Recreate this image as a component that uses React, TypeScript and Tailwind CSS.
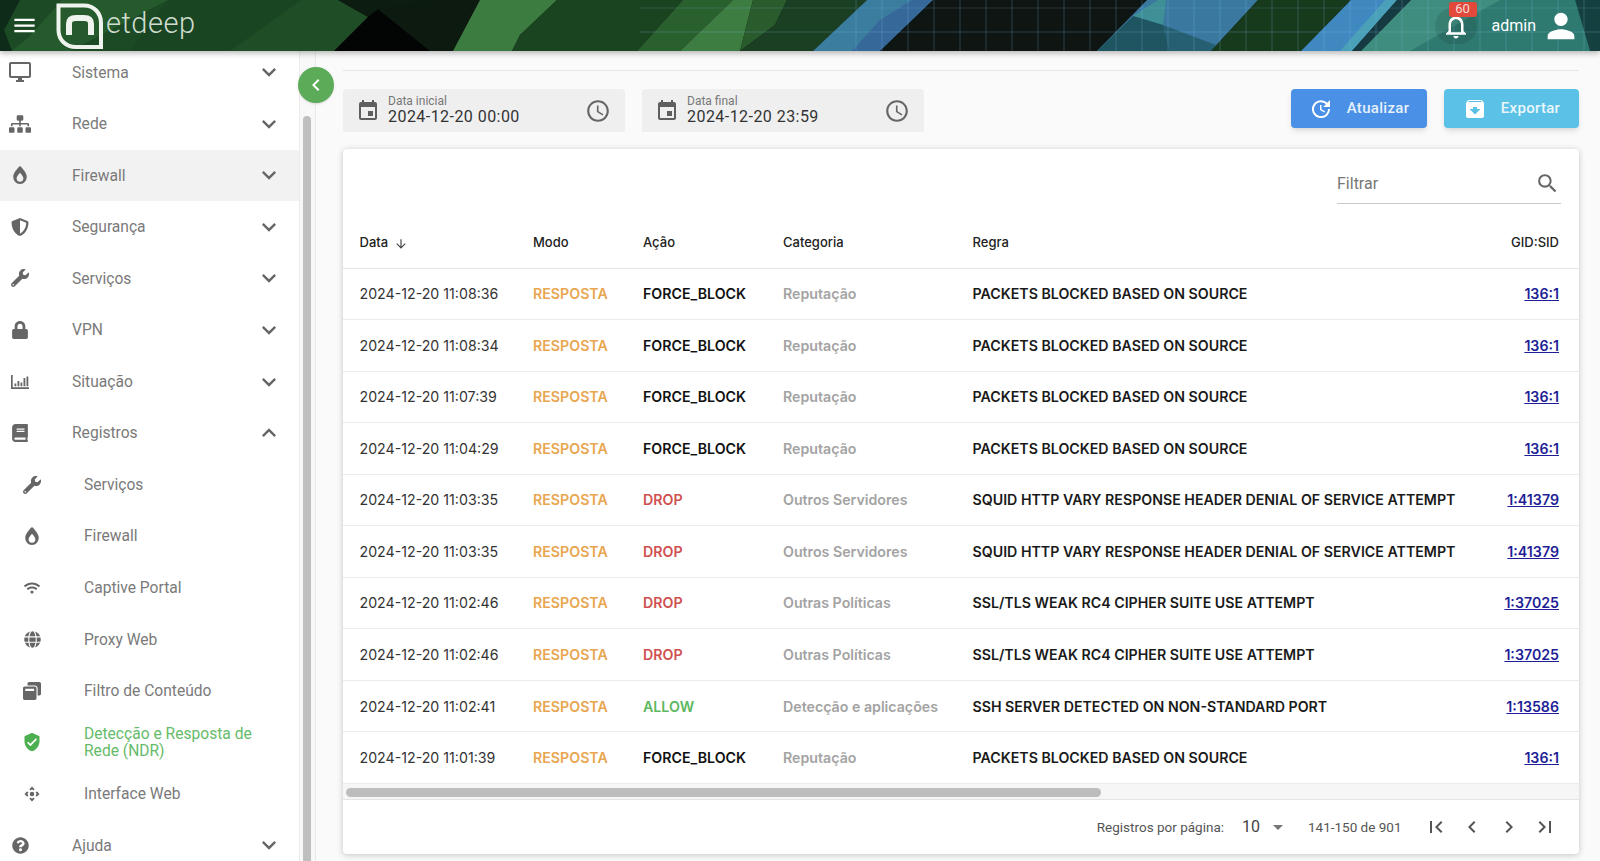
import React from "react";
import {
  MdMenu, MdExpandMore, MdExpandLess, MdOutlineDesktopWindows, MdVerifiedUser, MdControlCamera, MdChevronLeft, MdChevronRight,
  MdEvent, MdAccessTime, MdUpdate, MdArchive, MdSearch, MdOutlineNotifications, MdPerson, MdFirstPage, MdLastPage, MdArrowDownward, MdArrowDropDown,
} from "react-icons/md";
import { FaSitemap, FaBurn, FaShieldAlt, FaWrench, FaLock, FaBook, FaQuestionCircle, FaWifi, FaGlobe, FaWindowRestore } from "react-icons/fa";

function ChartIcon() {
  return (
    <svg width="18" height="14" viewBox="0 0 18 14" fill="#666">
      <path d="M0 0h1.700v12.300H18V14H0z" />
      <path d="M3.500 8.500h1.800v2.700H3.500zM6.500 6H8.300v5.200H6.500zM9.500 7.500h1.800v3.700H9.500zM12.500 3h1.800v8.200h-1.800zM15.500 1.500h1.800v9.700h-1.800z" />
    </svg>
  );
}

function HeaderArt() {
  const vs: number[] = [];
  for (let x = 856; x < 1600; x += 26) vs.push(x);
  return (
    <svg className="absolute inset-0 h-full w-full" viewBox="0 0 1600 51" preserveAspectRatio="none">
      <rect width="1600" height="51" fill="#0f1513" />
      <polygon points="0,0 338,0 368,17 334,51 0,51" fill="#1c4a24" />
      <polygon points="0,0 20,0 4,30 12,51 0,51" fill="#0e2a18" />
      <polygon points="12,51 30,36 62,0 168,0 70,51" fill="#255a2c" />
      <polygon points="130,51 168,0 300,0 230,51" fill="#1a4522" />
      <polygon points="302,0 338,0 368,17 334,51 230,51" fill="#1e4d26" />
      <polygon points="338,0 450,0 372,14 368,17" fill="#0c1c10" />
      <polygon points="368,17 378,9 430,51 334,51" fill="#030504" />
      <polygon points="378,9 440,0 480,0 453,51 430,51" fill="#0d1a10" />
      <polygon points="480,0 557,0 520,35 512,51 453,51" fill="#3d7c41" />
      <polygon points="557,0 683,0 637,51 512,51 520,35" fill="#1a4420" />
      <polygon points="683,0 733,0 680,51 637,51" fill="#2a5f2e" />
      <polygon points="733,0 753,0 740,51 680,51" fill="#3e7d42" />
      <polygon points="753,0 787,0 775,25 740,51" fill="#2a5b2d" />
      <polygon points="787,0 867,0 813,51 740,51 775,25" fill="#1a3f22" />
      <polygon points="867,0 933,0 880,51 813,51" fill="#3a7d9e" />
      <polygon points="880,20 912,0 933,0 880,51 852,51" fill="#36699a" />
      <polygon points="933,0 1147,0 1097,51 880,51" fill="#0f1513" />
      <polygon points="1147,0 1258,0 1211,51 1097,51" fill="#3a78a0" />
      <polygon points="1133,16 1158,0 1166,0 1163,25" fill="#3f8f96" />
      <polygon points="1133,16 1163,25 1170,51 1097,51" fill="#1e5560" />
      <polygon points="1163,25 1216,45 1211,51 1170,51" fill="#265f72" />
      <polygon points="1258,0 1351,0 1301,51 1211,51" fill="#17391c" />
      <polygon points="1351,0 1397,0 1352,51 1301,51" fill="#4088c0" />
      <polygon points="1385,0 1397,0 1352,51 1340,51" fill="#4aa0b8" />
      <polygon points="1397,0 1411,0 1361,51 1352,51" fill="#163a42" />
      <polygon points="1411,0 1600,0 1600,51 1361,51" fill="#3f8d7e" />
      <polygon points="1500,0 1575,0 1590,51 1410,51" fill="#2f7a70" />
      <polygon points="1575,0 1600,0 1600,51 1590,51" fill="#154040" />
      {vs.map((x) => (
        <line key={x} x1={x} y1="0" x2={x} y2="51" stroke="#7fc4e8" strokeOpacity="0.25" strokeWidth="1" />
      ))}
      <line x1="640" y1="8" x2="1600" y2="8" stroke="#7fc4e8" strokeOpacity="0.18" />
      <line x1="640" y1="32" x2="1600" y2="32" stroke="#7fc4e8" strokeOpacity="0.25" />
    </svg>
  );
}

function Logo() {
  return (
    <svg width="48" height="46" viewBox="0 0 48 46" fill="none" stroke="#eef3ee">
      <path d="M2.500 2.500H28C38 2.500 45 10 45 20V44H20C10 44 2.500 37 2.500 27Z" strokeWidth="4" />
      <path d="M13 32V21C13 17 15 15 20 15H28C33 15 35 17 35 21V32" strokeWidth="6" />
    </svg>
  );
}

type Item = { label: React.ReactNode; icon: React.ReactNode; sub?: boolean; open?: boolean; chev?: boolean; active?: boolean; hover?: boolean };

const items: Item[] = [
  { label: "Sistema", icon: <MdOutlineDesktopWindows size={24} />, chev: true },
  { label: "Rede", icon: <FaSitemap size={22} />, chev: true },
  { label: "Firewall", icon: <FaBurn size={18} />, chev: true, hover: true },
  { label: "Segurança", icon: <FaShieldAlt size={18} />, chev: true },
  { label: "Serviços", icon: <FaWrench size={18} />, chev: true },
  { label: "VPN", icon: <FaLock size={18} />, chev: true },
  { label: "Situação", icon: <ChartIcon />, chev: true },
  { label: "Registros", icon: <FaBook size={18} />, chev: true, open: true },
  { label: "Serviços", icon: <FaWrench size={18} />, sub: true },
  { label: "Firewall", icon: <FaBurn size={18} />, sub: true },
  { label: "Captive Portal", icon: <FaWifi size={16} />, sub: true },
  { label: "Proxy Web", icon: <FaGlobe size={17} />, sub: true },
  { label: "Filtro de Conteúdo", icon: <FaWindowRestore size={18} />, sub: true },
  { label: "Detecção e Resposta de Rede (NDR)", icon: <MdVerifiedUser size={20} />, sub: true, active: true },
  { label: "Interface Web", icon: <MdControlCamera size={18} />, sub: true },
  { label: "Ajuda", icon: <FaQuestionCircle size={17} />, chev: true },
];

function Row({ it }: { it: Item }) {
  return (
    <div className={`flex h-[51.55px] shrink-0 items-center ${it.hover ? "bg-[#f2f2f2]" : ""} ${it.sub ? "pl-3" : ""}`}>
      <span className={`flex w-10 shrink-0 items-center justify-center ${it.active ? "text-[#4caf50]" : "text-[#666666]"}`}>{it.icon}</span>
      <span className={`ml-8 pt-[2px] text-[15.6px] leading-[17.5px] ${it.sub ? "w-[190px]" : ""} ${it.active ? "text-[#66bb6a]" : "text-[#7a7a7a]"}`}>{it.label}</span>
      {it.chev && (
        <span className="ml-auto mr-[16px] text-[#666666]">
          {it.open ? <MdExpandLess size={28} /> : <MdExpandMore size={28} />}
        </span>
      )}
    </div>
  );
}

type Rec = [string, string, string, string, string];
const FB = "PACKETS BLOCKED BASED ON SOURCE";
const SQ = "SQUID HTTP VARY RESPONSE HEADER DENIAL OF SERVICE ATTEMPT";
const SS = "SSL/TLS WEAK RC4 CIPHER SUITE USE ATTEMPT";
const rows: Rec[] = [
  ["11:08:36", "FORCE_BLOCK", "Reputação", FB, "136:1"],
  ["11:08:34", "FORCE_BLOCK", "Reputação", FB, "136:1"],
  ["11:07:39", "FORCE_BLOCK", "Reputação", FB, "136:1"],
  ["11:04:29", "FORCE_BLOCK", "Reputação", FB, "136:1"],
  ["11:03:35", "DROP", "Outros Servidores", SQ, "1:41379"],
  ["11:03:35", "DROP", "Outros Servidores", SQ, "1:41379"],
  ["11:02:46", "DROP", "Outras Políticas", SS, "1:37025"],
  ["11:02:46", "DROP", "Outras Políticas", SS, "1:37025"],
  ["11:02:41", "ALLOW", "Detecção e aplicações", "SSH SERVER DETECTED ON NON-STANDARD PORT", "1:13586"],
  ["11:01:39", "FORCE_BLOCK", "Reputação", FB, "136:1"],
];

function actionColor(a: string) {
  if (a === "DROP") return "text-[#cf5050]";
  if (a === "ALLOW") return "text-[#5cb860]";
  return "text-[#111111]";
}

function DateField({ label, value }: { label: string; value: string }) {
  return (
    <div className="flex h-[43px] w-[282px] items-center rounded-t bg-[#efefef] pl-[13px] pr-[14px]">
      <MdEvent size={24} className="text-[#5f5f5f]" />
      <div className="ml-[8px] flex flex-col">
        <span className="text-[12px] leading-[13px] text-[#777777]">{label}</span>
        <span className="text-[16px] leading-[18px] tracking-[0.45px] text-[#333333]">{value}</span>
      </div>
      <MdAccessTime size={26} className="ml-auto text-[#666666]" />
    </div>
  );
}

export default function App() {
  return (
    <div className="flex h-screen w-full flex-col overflow-hidden bg-[#fafafa] font-['Roboto',sans-serif]">
      <header className="relative z-10 flex h-[51px] shrink-0 items-center shadow-[0_2px_6px_rgba(0,0,0,0.3)]">
        <HeaderArt />
        <div className="relative flex w-full items-center">
          <MdMenu size={27} className="ml-[11px] text-white" />
          <div className="ml-[18px]"><Logo /></div>
          <span className="ml-[2px] mt-[-5px] text-[29px] font-light leading-none tracking-[0.5px] text-[#cfdccf]">etdeep</span>
          <div className="ml-auto flex items-center">
            <div className="relative">
              <span className="absolute left-[-6px] top-[-3px] h-9 w-[42px] rounded-full bg-black/10" />
              <MdOutlineNotifications size={30} className="relative text-white" />
              <span className="absolute left-[8px] top-[-9px] flex h-[15px] w-[28px] items-center justify-center rounded-[3px] bg-[#e2493b] text-[13px] text-[#f6dcd8]">60</span>
            </div>
            <span className="ml-[21px] text-[16px] text-white">admin</span>
            <MdPerson size={40} className="ml-[5px] mr-[19px] text-white" />
          </div>
        </div>
      </header>

      <div className="relative flex min-h-0 flex-1">
        <nav className="w-[300px] shrink-0 overflow-hidden border-r border-[#ececec] bg-white">
          <div className="mt-[-4.5px] flex flex-col">
            {items.map((it, i) => (
              <Row key={i} it={it} />
            ))}
          </div>
        </nav>
        <div className="w-4 shrink-0 border-r border-[#e8e8e8] bg-[#f8f8f8] px-[3px] pt-[65px]">
          <div className="h-[900px] w-2 rounded-full bg-[#bfbfbf]" />
        </div>
        <button className="absolute left-[298px] top-4 flex h-9 w-9 items-center justify-center rounded-full bg-[#5cab58] text-white shadow">
          <MdChevronLeft size={24} />
        </button>

        <main className="flex min-w-0 flex-1 flex-col pl-[27px] pr-[21px] pt-[19px]">
          <div className="h-px bg-[#e6e6e6]" />
          <div className="mt-[18px] flex items-start">
            <DateField label="Data inicial" value="2024-12-20 00:00" />
            <div className="ml-[17px]"><DateField label="Data final" value="2024-12-20 23:59" /></div>
            <button className="ml-auto flex h-[39px] w-[136px] items-center justify-center gap-[14px] rounded bg-[#4a90e6] text-[15px] font-medium tracking-[0.3px] text-[#e6f0fb] shadow-md">
              <MdUpdate size={24} className="text-white" />Atualizar
            </button>
            <button className="ml-[17px] flex h-[39px] w-[135px] items-center justify-center gap-[14px] rounded bg-[#5cc1e6] text-[15px] font-medium tracking-[0.3px] text-[#e9f7fc] shadow-md">
              <MdArchive size={24} className="text-white" />Exportar
            </button>
          </div>

          <section className="mt-[17px] flex h-[705px] flex-col rounded bg-white shadow-[0_1px_6px_rgba(0,0,0,0.22)]">
            <div className="flex h-[66px] shrink-0 justify-end pr-[18px] pt-[20px]">
              <div className="flex h-[35px] w-[224px] items-center justify-between border-b border-[#c8c8c8] pb-[5px]">
                <span className="text-[16px] text-[#777777]">Filtrar</span>
                <MdSearch size={25} className="mr-[1px] text-[#666666]" />
              </div>
            </div>
            <table className="w-full table-fixed border-collapse font-['Inter',sans-serif] text-[14.2px]">
              <colgroup>
                <col className="w-[190px]" />
                <col className="w-[110px]" />
                <col className="w-[140px]" />
                <col className="w-[189.5px]" />
                <col />
                <col className="w-[120px]" />
              </colgroup>
              <thead>
                <tr className="h-[53px] border-b border-[#e6e6e6] text-left text-[13px] text-[#222222]">
                  <th className="pl-[16.5px] pt-[2px] font-medium">
                    <span className="inline-flex items-center gap-[6px]">Data <MdArrowDownward size={14} className="mt-[3px] text-[#444444]" /></span>
                  </th>
                  <th className="pt-[2px] font-medium">Modo</th>
                  <th className="pt-[2px] font-medium">Ação</th>
                  <th className="pt-[2px] font-medium">Categoria</th>
                  <th className="pt-[2px] font-medium">Regra</th>
                  <th className="pr-[20px] pt-[2px] text-right font-medium">GID:SID</th>
                </tr>
              </thead>
              <tbody>
                {rows.map((r, i) => (
                  <tr key={i} className="h-[51.55px] border-b border-[#ebebeb]">
                    <td className="pl-[16.5px] text-[#333333]">2024-12-20 {r[0]}</td>
                    <td className="font-semibold text-[#e8a650]">RESPOSTA</td>
                    <td className={`font-semibold ${actionColor(r[1])}`}>{r[1]}</td>
                    <td className="font-semibold text-[#a3a3a3]">{r[2]}</td>
                    <td className="whitespace-nowrap font-semibold text-[#1a1a1a]">{r[3]}</td>
                    <td className="pr-[20px] text-right font-semibold text-[#1e1e96] underline">{r[4]}</td>
                  </tr>
                ))}
              </tbody>
            </table>
            <div className="h-4 shrink-0 border-b border-[#e4e4e4] bg-[#f6f6f6] px-[3px] pt-[4px]">
              <div className="h-[9px] w-[755px] rounded-full bg-[#bdbdbd]" />
            </div>
            <div className="flex flex-1 items-center justify-end pr-[22px] pt-[1px] text-[13.5px] text-[#555555]">
              <span>Registros por página:</span>
              <span className="ml-[18px] text-[16px] text-[#444444]">10</span>
              <MdArrowDropDown size={24} className="ml-[6px] text-[#777777]" />
              <span className="ml-[18px]">141-150 de 901</span>
              <div className="ml-[22px] flex items-center gap-[12.5px] text-[#555555]">
                <MdFirstPage size={24} />
                <MdChevronLeft size={24} />
                <MdChevronRight size={24} />
                <MdLastPage size={24} />
              </div>
            </div>
          </section>
        </main>
      </div>
    </div>
  );
}
